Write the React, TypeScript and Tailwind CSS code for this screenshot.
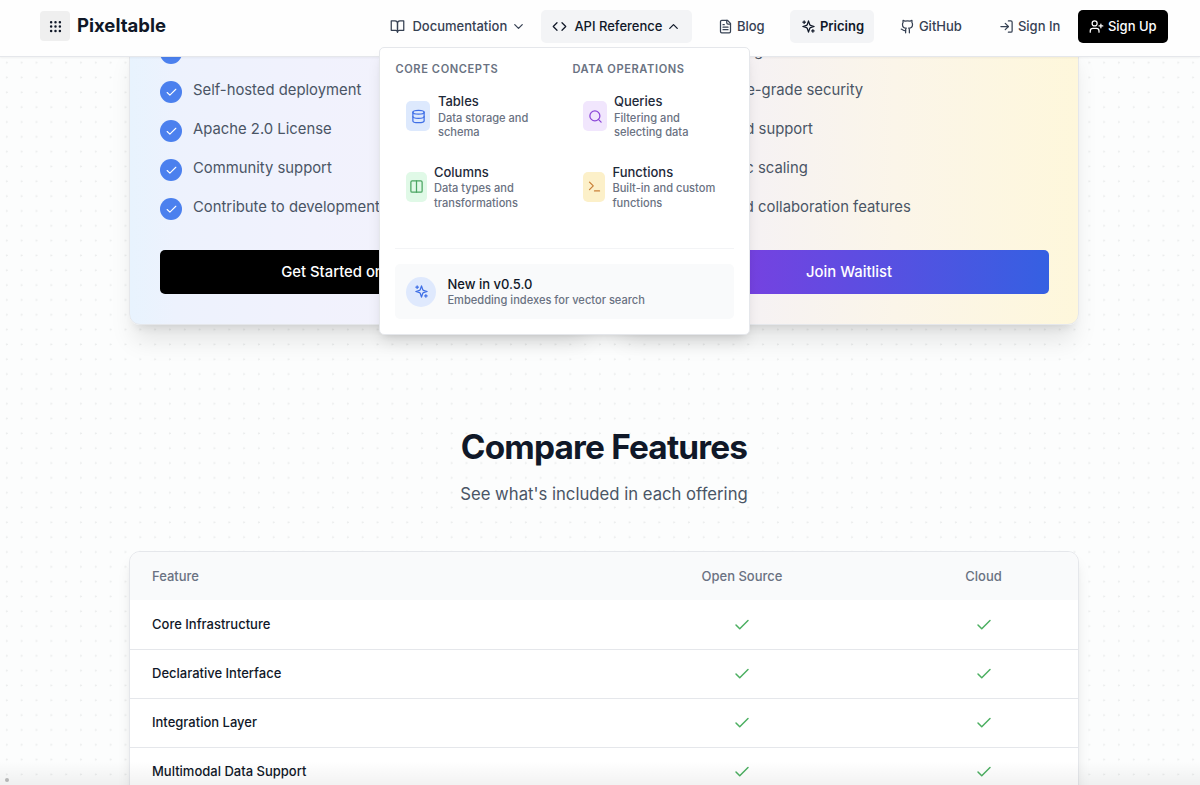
import type { ReactNode } from 'react';
import {
  Check,
  ChevronDown,
  ChevronUp,
  Columns2,
  Database,
  Github,
  Grip,
  LogIn,
  Search,
  Terminal,
  UserPlus,
} from 'lucide-react';
import clsx from 'clsx';

interface IconProps {
  className?: string;
}

function Svg({ className, children }: IconProps & { children: ReactNode }) {
  return (
    <svg
      viewBox="0 0 24 24"
      fill="none"
      stroke="currentColor"
      strokeWidth={2}
      strokeLinecap="round"
      strokeLinejoin="round"
      className={className}
    >
      {children}
    </svg>
  );
}

function BookIcon({ className }: IconProps) {
  return (
    <Svg className={className}>
      <path d="M2 3h6a4 4 0 0 1 4 4v14a3 3 0 0 0-3-3H2z" />
      <path d="M22 3h-6a4 4 0 0 0-4 4v14a3 3 0 0 1 3-3h7z" />
    </Svg>
  );
}

function CodeIcon({ className }: IconProps) {
  return (
    <Svg className={className}>
      <polyline points="16 18 22 12 16 6" />
      <polyline points="8 6 2 12 8 18" />
    </Svg>
  );
}

function FileIcon({ className }: IconProps) {
  return (
    <Svg className={className}>
      <path d="M15 2H6a2 2 0 0 0-2 2v16a2 2 0 0 0 2 2h12a2 2 0 0 0 2-2V7Z" />
      <path d="M14 2v4a2 2 0 0 0 2 2h4" />
      <path d="M10 9H8" />
      <path d="M16 13H8" />
      <path d="M16 17H8" />
    </Svg>
  );
}

function SparklesIcon({ className }: IconProps) {
  return (
    <Svg className={className}>
      <path d="m12 3-1.912 5.813a2 2 0 0 1-1.275 1.275L3 12l5.813 1.912a2 2 0 0 1 1.275 1.275L12 21l1.912-5.813a2 2 0 0 1 1.275-1.275L21 12l-5.813-1.912a2 2 0 0 1-1.275-1.275L12 3Z" />
      <path d="M5 3v4" />
      <path d="M19 17v4" />
      <path d="M3 5h4" />
      <path d="M17 19h4" />
    </Svg>
  );
}

const coreConcepts = [
  {
    title: 'Tables',
    description: 'Data storage and schema',
    icon: <Database className="h-[15px] w-[15px] text-[#3f6fe6]" />,
    box: 'w-6 mr-[7.5px] bg-[#dde9fd]',
  },
  {
    title: 'Columns',
    description: 'Data types and transformations',
    icon: <Columns2 className="h-[15px] w-[15px] text-[#4ba563]" />,
    box: 'w-[20.5px] mr-[7px] bg-[#e0f9e7]',
  },
];

const dataOperations = [
  {
    title: 'Queries',
    description: 'Filtering and selecting data',
    icon: <Search className="h-[15px] w-[15px] text-[#8b46d8]" />,
    box: 'w-[23.5px] mr-[7px] bg-[#f1e6fd]',
  },
  {
    title: 'Functions',
    description: 'Built-in and custom functions',
    icon: <Terminal className="h-[15px] w-[15px] text-[#c98038]" />,
    box: 'w-[22px] mr-[7px] bg-[#fcf0c9]',
  },
];

const openSourceFeatures = [
  'Full source code access',
  'Self-hosted deployment',
  'Apache 2.0 License',
  'Community support',
  'Contribute to development',
];

const cloudFeatures = [
  'Full hosting',
  'Enterprise-grade security',
  'Dedicated support',
  'Automatic scaling',
  'Advanced collaboration features',
];

const comparison = [
  'Core Infrastructure',
  'Declarative Interface',
  'Integration Layer',
  'Multimodal Data Support',
];

function MenuColumn({ title, items }: { title: string; items: typeof coreConcepts }) {
  return (
    <div className="w-[162px]">
      <h3 className="text-[11.1px] leading-[15px] font-semibold tracking-[0.6px] whitespace-nowrap text-gray-500">
        {title}
      </h3>
      <div className="mt-[12px] flex flex-col">
        {items.map((item) => (
          <div key={item.title} className="flex h-[70.6px] items-start pt-[10px] pl-[11px]">
            <div
              className={clsx('mt-[2px] flex h-[30px] shrink-0 items-center justify-center rounded-[5px]', item.box)}
            >
              {item.icon}
            </div>
            <div className="-mt-[7px] w-[104px]">
              <div className="text-[13px] leading-[18.5px] font-medium text-gray-800">{item.title}</div>
              <p className="text-[11.1px] leading-[14.8px] text-gray-500">{item.description}</p>
            </div>
          </div>
        ))}
      </div>
    </div>
  );
}

function ApiMenu() {
  return (
    <div className="absolute top-[37px] left-[-162px] h-[288px] w-[371px] rounded-[5px] border border-gray-200 bg-white px-[15px] pt-[14px] shadow-lg">
      <div className="flex h-[186px] gap-[15px]">
        <MenuColumn title="CORE CONCEPTS" items={coreConcepts} />
        <MenuColumn title="DATA OPERATIONS" items={dataOperations} />
      </div>
      <div className="border-t border-gray-100 pt-[15px]">
        <div className="flex h-[55px] items-center rounded-[5px] bg-gray-50 pl-[11px]">
          <div className="flex h-[30px] w-[30px] items-center justify-center rounded-full bg-[#dfe9fd]">
            <SparklesIcon className="h-[15px] w-[15px] text-[#3f6fe6]" />
          </div>
          <div className="ml-[11px]">
            <div className="text-[13px] leading-[18.5px] font-medium text-gray-900">New in v0.5.0</div>
            <p className="text-[11.1px] leading-[14.8px] text-gray-500">Embedding indexes for vector search</p>
          </div>
        </div>
      </div>
    </div>
  );
}

function Header() {
  return (
    <header className="relative z-20 flex h-[57px] shrink-0 items-start justify-between border-b border-gray-200 bg-[#fefefe] pt-[10px] pr-[31.6px] pl-10 shadow-xs">
      <div className="flex h-8 items-center">
        <div className="flex h-[30px] w-[30px] items-center justify-center rounded-[4px] bg-[#efefef]">
          <Grip className="h-[15px] w-[15px] text-gray-900" />
        </div>
        <span className="ml-[7px] text-[18.5px] font-bold text-gray-900">Pixeltable</span>
      </div>

      <nav className="flex h-[33px] text-[13px] font-medium text-gray-700">
        <a className="flex w-[156px] items-center pl-[11px]">
          <BookIcon className="mr-[7px] h-[15px] w-[15px]" />
          Documentation
          <ChevronDown className="ml-[4px] h-[15px] w-[15px]" />
        </a>
        <div className="relative ml-[6px]">
          <a className="flex h-[33px] w-[151px] items-center rounded-[5px] bg-gray-100 pl-[11px] text-gray-900">
            <CodeIcon className="mr-[7px] h-[15px] w-[15px]" />
            API Reference
            <ChevronUp className="ml-[4px] h-[15px] w-[15px]" />
          </a>
          <ApiMenu />
        </div>
        <a className="ml-[15px] flex w-[68px] items-center pl-[11px]">
          <FileIcon className="mr-[3.5px] h-[15px] w-[15px]" />
          Blog
        </a>
        <a className="ml-[15px] flex w-[84px] items-center rounded-[5px] bg-gray-100 pl-[11px] font-semibold text-gray-900">
          <SparklesIcon className="mr-[3.5px] h-[15px] w-[15px]" />
          Pricing
        </a>
        <a className="ml-[15px] flex w-[84px] items-center pl-[11px]">
          <Github className="mr-[3.5px] h-[15px] w-[15px]" />
          GitHub
        </a>
        <a className="ml-[15px] flex w-[83px] items-center pl-[11px]">
          <LogIn className="mr-[3.5px] h-[15px] w-[15px]" />
          Sign In
        </a>
        <a className="ml-[7px] flex w-[90px] items-center rounded-[5px] bg-black pl-[11px] text-white">
          <UserPlus className="mr-[3.5px] h-[15px] w-[15px]" />
          Sign Up
        </a>
      </nav>
    </header>
  );
}

function PlanCard({
  features,
  cardClass,
  buttonClass,
  label,
}: {
  features: string[];
  cardClass: string;
  buttonClass: string;
  label: string;
}) {
  return (
    <div
      className={clsx('w-[460px] rounded-[11px] border border-gray-200 pr-[29px] pb-[30px] pl-[30px] shadow-xl', cardClass)}
    >
      <ul className="flex flex-col gap-[15px]">
        {features.map((feature) => (
          <li key={feature} className="flex h-6 items-start">
            <span className="mt-[3px] mr-[11px] flex h-[22px] w-[22px] shrink-0 items-center justify-center rounded-full bg-[#4b80ee] text-white">
              <Check className="h-[13px] w-[13px]" />
            </span>
            <span className="text-[14.83px] leading-6 text-gray-600">{feature}</span>
          </li>
        ))}
      </ul>
      <button
        className={clsx(
          'mt-[31px] flex h-[44px] w-full items-center justify-center rounded-[5px] pr-[1px] text-[14.83px] font-medium text-white',
          buttonClass
        )}
      >
        {label}
      </button>
    </div>
  );
}

export default function App() {
  return (
    <div className="relative flex h-[785px] w-[1200px] flex-col overflow-hidden bg-[#fcfdfd] bg-[radial-gradient(circle_at_6.7px_3.4px,#ebeded_0.7px,transparent_1.3px)] bg-[size:14.83px_14.83px] font-['Inter',sans-serif]">
      <Header />

      <main className="-mt-[19px] flex flex-col pl-[129px]">
        {/* Plans */}
        <div className="flex gap-[30px]">
          <PlanCard
            features={openSourceFeatures}
            cardClass="bg-[linear-gradient(to_right,#e8f3fe,#edf2fd_10%,#f1f2fd_40%,#f5f2fa)]"
            buttonClass="bg-black"
            label="Get Started on GitHub"
          />
          <PlanCard
            features={cloudFeatures}
            cardClass="bg-[linear-gradient(to_right,#f2f0fb,#f6f2f3_30%,#fbf5e9_60%,#fef7db)]"
            buttonClass="bg-[linear-gradient(to_right,#8a38e0,#3560e2)]"
            label="Join Waitlist"
          />
        </div>

        {/* Comparison */}
        <section className="mt-[102px] w-[950px]">
          <h2 className="text-center text-[33.4px] leading-[40px] font-bold tracking-[-0.83px] text-gray-900">
            Compare Features
          </h2>
          <p className="mt-[14px] text-center text-[16.7px] leading-[26px] text-gray-600">
            See what's included in each offering
          </p>

          <div className="mt-[44px] overflow-hidden rounded-t-[11px] border border-gray-200 bg-white text-[13px] font-medium shadow-lg">
            <div className="grid h-[48px] grid-cols-[466px_292px_191px] items-center bg-gray-50 pt-[2px] text-gray-500">
              <span className="pl-[22px]">Feature</span>
              <span className="text-center">Open Source</span>
              <span className="text-center">Cloud</span>
            </div>
            {comparison.map((name, i) => (
              <div
                key={name}
                className={clsx(
                  'grid grid-cols-[466px_292px_191px] items-center border-gray-200 text-gray-900',
                  i === 0 ? 'h-[49px] pt-[1px]' : 'h-[49.1px] border-t'
                )}
              >
                <span className="pl-[22px]">{name}</span>
                <Check className="h-[18px] w-[18px] justify-self-center text-[#4caf61]" strokeWidth={2} />
                <Check className="h-[18px] w-[18px] justify-self-center text-[#4caf61]" strokeWidth={2} />
              </div>
            ))}
          </div>
        </section>
      </main>

      <div className="absolute inset-x-0 bottom-0 h-6 bg-gradient-to-b from-transparent to-black/5" />
      <div className="absolute bottom-[3px] left-[5px] h-[4px] w-[4px] rounded-full bg-[#b5b6b6]" />
    </div>
  );
}
